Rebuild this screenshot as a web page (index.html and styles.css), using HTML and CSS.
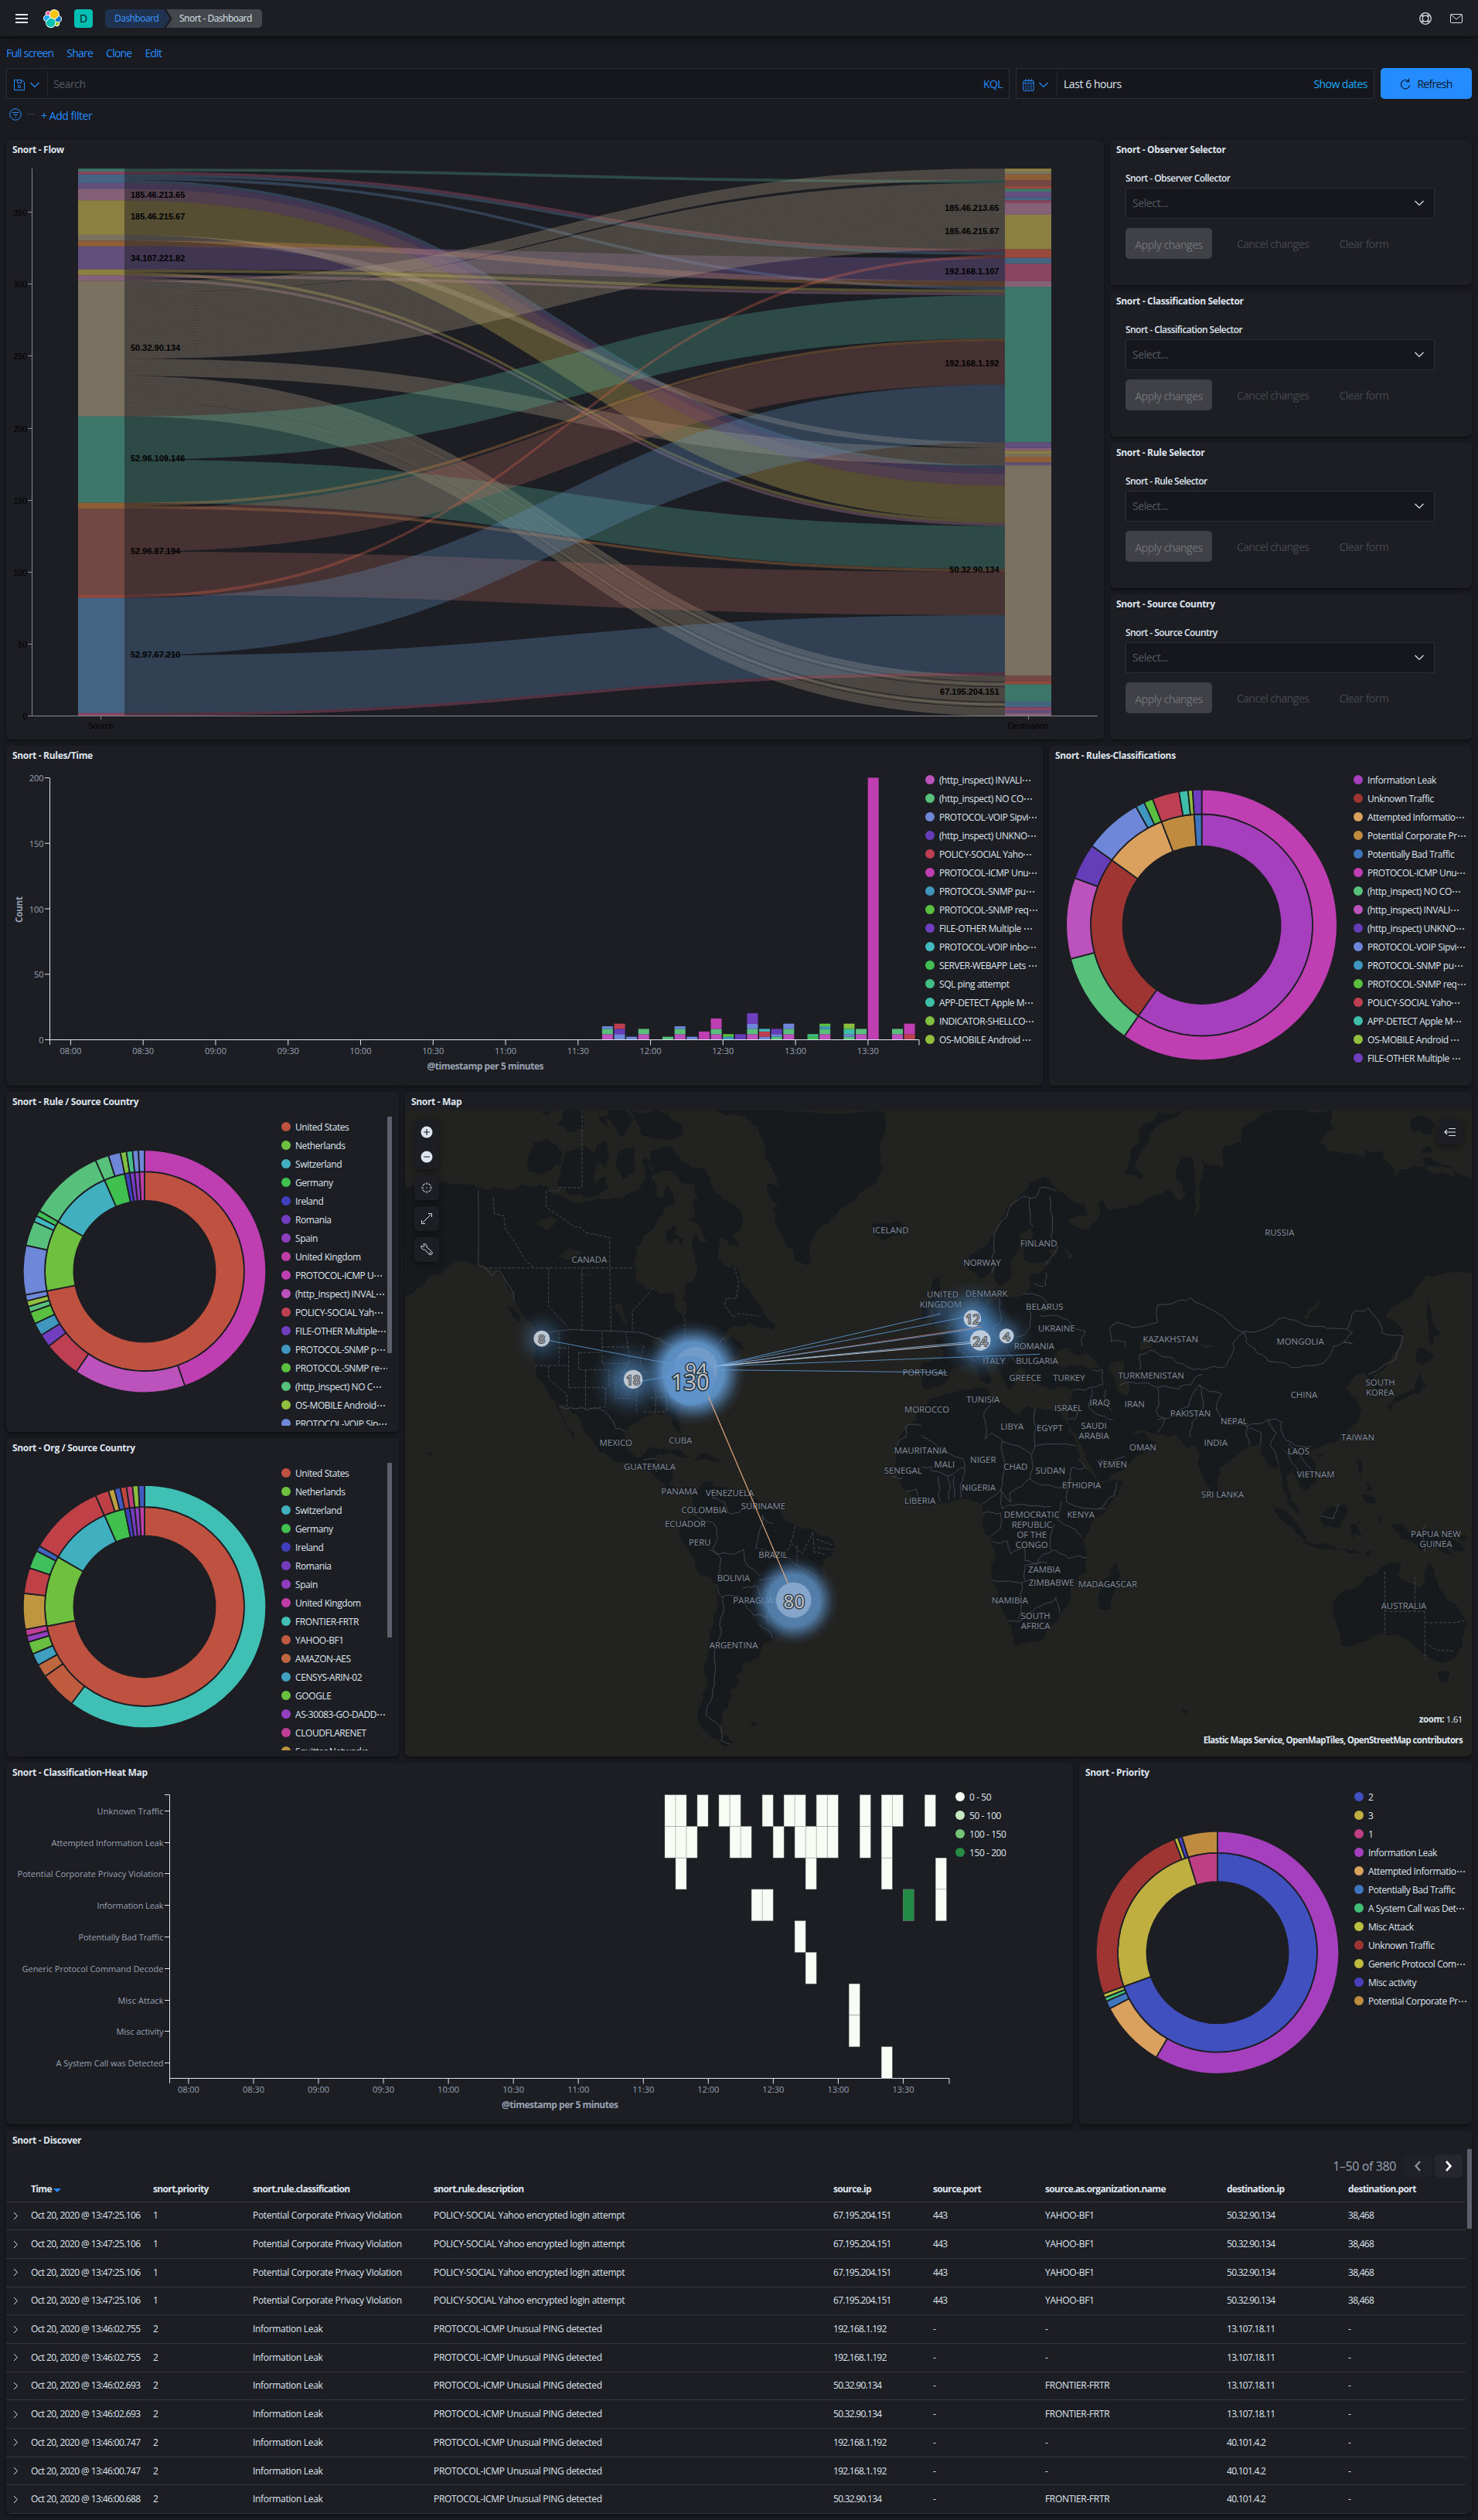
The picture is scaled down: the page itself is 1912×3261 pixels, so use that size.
FILE: index.html
```
<!DOCTYPE html>
<html lang="en">
<head>
<meta charset="utf-8">
<title>Snort - Dashboard</title>
<link rel="stylesheet" href="styles.css">
</head>
<body>
<header class="topbar">
  <svg class="burger" width="16" height="12" viewBox="0 0 16 12"><path d="M0 1h16M0 6h16M0 11h16" stroke="#dfe5ef" stroke-width="2"/></svg>
  <svg class="logo" width="24" height="24" viewBox="0 0 32 32">
    <path fill="#FFF" d="M32 16.77a6.33 6.33 0 0 0-1.14-3.63 6.27 6.27 0 0 0-3.02-2.3 8.91 8.91 0 0 0 .15-1.68 9.07 9.07 0 0 0-16.39-5.3 4.8 4.8 0 0 0-7.46 5.66 6.37 6.37 0 0 0-3 2.32A6.36 6.36 0 0 0 0 15.48a6.37 6.37 0 0 0 1.15 3.66 6.28 6.28 0 0 0 3.04 2.31 8.7 8.7 0 0 0-.15 1.67A9.06 9.06 0 0 0 20.38 28.4a4.8 4.8 0 0 0 7.46-5.66 6.35 6.35 0 0 0 3.01-2.32A6.35 6.35 0 0 0 32 16.77"/>
    <path fill="#FEC514" d="M12.58 13.79l7 3.21 7.07-6.21c.1-.51.15-1.03.15-1.56a7.85 7.85 0 0 0-14.3-4.43l-1.18 6.12z"/>
    <path fill="#00BFB3" d="M5.33 21.21a8 8 0 0 0-.15 1.58 7.87 7.87 0 0 0 14.36 4.41l1.17-6.09-1.56-2.98-7.03-3.21z"/>
    <path fill="#F04E98" d="M5.29 9.07l4.8 1.13 1.05-5.47a3.79 3.79 0 0 0-5.85 4.34"/>
    <path fill="#1BA9F5" d="M4.87 10.21a5.3 5.3 0 0 0-3.6 5.03 5.31 5.31 0 0 0 3.38 4.94l6.74-6.11-1.24-2.65z"/>
    <path fill="#93C90E" d="M20.87 27.18a3.76 3.76 0 0 0 2.29.78 3.79 3.79 0 0 0 3.57-5.04l-4.8-1.12z"/>
    <path fill="#0077CC" d="M21.85 20.56l5.28 1.24a5.3 5.3 0 0 0 3.6-5.03 5.31 5.31 0 0 0-3.39-4.94l-6.91 6.04z"/>
  </svg>
  <span class="space">D</span>
  <nav class="crumbs"><a class="crumb first">Dashboard</a><span class="crumb last">Snort - Dashboard</span></nav>
  <div class="topicons">
    <svg width="16" height="16" viewBox="0 0 16 16" fill="none" stroke="#dfe5ef" stroke-width="1.200"><circle cx="8" cy="8" r="7.300"/><circle cx="8" cy="8" r="3.800"/><path d="M3.600 2.300l2.400 2.600M2.400 3.700l2.500 2.300M12.400 2.300L10 4.900M13.600 3.700L11.100 6M3.600 13.700L6 11.100M2.400 12.300L4.900 10M12.400 13.700L10 11.100M13.600 12.300L11.100 10"/></svg>
    <svg width="16" height="16" viewBox="0 0 16 16" fill="none" stroke="#dfe5ef"><rect x=".5" y="2.5" width="15" height="11" rx="1"/><path d="M1 3l7 6 7-6"/></svg>
  </div>
</header>
<nav class="menu"><a>Full screen</a><a>Share</a><a>Clone</a><a>Edit</a></nav>
<div class="querybar">
  <div class="box search">
    <div class="prefix">
      <svg width="16" height="16" viewBox="0 0 16 16" fill="none" stroke="#258cff"><path d="M1.5 1.5h10l3 3v10h-13zM5.5 1.5v4h5v-4"/><circle cx="8" cy="10" r="1.6"/></svg>
      <svg width="12" height="8" viewBox="0 0 12 8" fill="none" stroke="#258cff" stroke-width="1.2"><path d="M.5 1L6 6.5 11.5 1"/></svg>
    </div>
    <span class="placeholder">Search</span><a class="kql">KQL</a>
  </div>
  <div class="box dates">
    <div class="prefix date">
      <svg width="15" height="16" viewBox="0 0 15 16" fill="none" stroke="#258cff"><rect x=".8" y="2.5" width="13.4" height="13" rx="1"/><path d="M1 5.5h13M4 0v3.5M7.5 0v3.5M11 0v3.5M3 8h2m1.5 0h2m1.5 0h2M3 10.5h2m1.5 0h2m1.5 0h2M3 13h2m1.5 0h2m1.5 0h2"/></svg>
      <svg width="12" height="8" viewBox="0 0 12 8" fill="none" stroke="#258cff" stroke-width="1.2"><path d="M.5 1L6 6.5 11.5 1"/></svg>
    </div>
    <span class="range">Last 6 hours</span><a class="show">Show dates</a>
  </div>
  <button class="refresh"><svg width="14" height="16" viewBox="0 0 14 16" fill="none" stroke="#0b1628" stroke-width="1.1"><path d="M11.5 4.500A5.700 5.700 0 1 0 12.800 9M11.600.800v4h-4"/></svg>Refresh</button>
</div>
<div class="filters">
  <svg width="16" height="16" viewBox="0 0 16 16" fill="none" stroke="#258cff"><circle cx="8" cy="8" r="7.300"/><path d="M3.500 5.500h9M5.500 8.500h5M7.300 11.500h1.400"/></svg>
  <i class="dash"></i><a>+ Add filter</a>
</div>
<main class="rows">
  <section class="row r1">
    <article class="panel"><h2>Snort - Flow</h2><svg id="flow" class="chart" viewBox="8 205 1420 752"></svg></article>
    <div class="selectors" id="selectors"></div>
  </section>
  <section class="row r2">
    <article class="panel"><h2>Snort - Rules/Time</h2><div class="body"><svg id="rules" class="chart" viewBox="8 989 1189 416"></svg><ul class="legend" id="lg-rules"></ul></div></article>
    <article class="panel"><h2>Snort - Rules-Classifications</h2><div class="body"><svg id="classif" class="chart" viewBox="1358 989 394 416"></svg><ul class="legend" id="lg-classif"></ul></div></article>
  </section>
  <section class="row r3">
    <div class="stack">
      <article class="panel"><h2>Snort - Rule / Source Country</h2><div class="body clip"><svg id="rulesrc" class="chart" viewBox="8 1437 356 416"></svg><ul class="legend" id="lg-rulesrc"></ul><i class="thumb"></i></div></article>
      <article class="panel"><h2>Snort - Org / Source Country</h2><div class="body clip"><svg id="orgsrc" class="chart" viewBox="8 1885 356 388"></svg><ul class="legend" id="lg-orgsrc"></ul><i class="thumb short"></i></div></article>
    </div>
    <article class="panel mappanel"><h2>Snort - Map</h2>
      <svg id="map" class="chart" viewBox="524 1437 1380 836"></svg>
      <div class="mapctl left">
        <div class="ctl tall">
          <svg width="16" height="16" viewBox="0 0 16 16"><circle cx="8" cy="8" r="7.500" fill="#dfe5ef"/><path d="M4 8h8M8 4v8" stroke="#1d1e24" stroke-width="1.200"/></svg>
          <svg width="16" height="16" viewBox="0 0 16 16"><circle cx="8" cy="8" r="7.500" fill="#dfe5ef"/><path d="M4 8h8" stroke="#1d1e24" stroke-width="1.200"/></svg>
        </div>
        <div class="ctl"><svg width="16" height="16" viewBox="0 0 16 16" fill="none" stroke="#dfe5ef"><path d="M8 1v3M8 12v3M1 8h3M12 8h3M7.300 8h1.400M2.700 5.800A6 6 0 0 1 5.800 2.700M10.200 2.700A6 6 0 0 1 13.300 5.800M13.300 10.200A6 6 0 0 1 10.200 13.300M5.800 13.300A6 6 0 0 1 2.700 10.200"/></svg></div>
        <div class="ctl"><svg width="16" height="16" viewBox="0 0 16 16" fill="none" stroke="#dfe5ef"><path d="M1.500 10v4.500H6M10 1.500h4.500V6M3 13l10-10"/></svg></div>
        <div class="ctl"><svg width="16" height="16" viewBox="0 0 16 16" fill="none" stroke="#dfe5ef"><path d="M1 3l3 1.500L5.200 3.300 3.800.800C6.500 0 9 2.200 8 5l6.500 5.500a2.400 2.400 0 0 1-3.500 3.500L5.500 8C3 9 .200 6 1 3z"/><circle cx="12.500" cy="12.300" r=".6"/></svg></div>
      </div>
      <div class="mapctl right"><div class="ctl"><svg width="16" height="12" viewBox="0 0 16 12" fill="none" stroke="#dfe5ef" stroke-width="1.200"><path d="M6 1.500h9M1 6h14M6 10.500h9M4 3L1 6l3 3"/></svg></div></div>
      <div class="mapnote"><p><b>zoom:</b> 1.61</p><p><b>Elastic Maps Service, OpenMapTiles, OpenStreetMap contributors</b></p></div>
    </article>
  </section>
  <section class="row r4">
    <article class="panel"><h2>Snort - Classification-Heat Map</h2><div class="body"><svg id="heat" class="chart" viewBox="8 2305 1228 444"></svg><ul class="legend" id="lg-heat"></ul></div></article>
    <article class="panel"><h2>Snort - Priority</h2><div class="body"><svg id="priority" class="chart" viewBox="1396 2305 356 444"></svg><ul class="legend" id="lg-priority"></ul></div></article>
  </section>
  <section class="row r5">
    <article class="panel discover"><h2>Snort - Discover</h2>
      <div class="scroll">
        <div class="pager"><span>1–50 of 380</span>
          <button class="pg off"><svg width="10" height="16" viewBox="0 0 10 16" fill="none" stroke="#8a8f98" stroke-width="2.400"><path d="M8 2L2.500 8 8 14"/></svg></button>
          <button class="pg"><svg width="10" height="16" viewBox="0 0 10 16" fill="none" stroke="#fff" stroke-width="2.600"><path d="M2 2l5.500 6L2 14"/></svg></button>
        </div>
        <table>
          <thead><tr><th></th><th>Time<i class="sort"></i></th><th>snort.priority</th><th>snort.rule.classification</th><th>snort.rule.description</th><th>source.ip</th><th>source.port</th><th>source.as.organization.name</th><th>destination.ip</th><th>destination.port</th></tr></thead>
          <tbody id="events"></tbody>
        </table>
      </div>
      <i class="thumb"></i>
    </article>
  </section>
</main>
<script src="charts.js"></script>
<script src="map.js"></script>
</body>
</html>
```
FILE: styles.css
```
* { box-sizing: border-box; }
body { margin: 0; background: #1a1b20; color: #dfe5ef; font: 12px/16px "Open Sans", sans-serif; width: 1912px; height: 3261px; overflow: hidden; }
h2, p, ul { margin: 0; padding: 0; }
button { border: 0; font: inherit; }
a { color: #258cff; }
svg { display: block; flex: none; }

.topbar { height: 47px; display: flex; align-items: center; padding: 1px 20px 0; background: #1d1e24; box-shadow: 0 2px 2px rgba(0,0,0,.4), 0 6px 14px rgba(0,0,0,.2); position: relative; }
.logo { margin-left: 20px; }
.space { width: 24px; height: 24px; margin: 0 16px; border-radius: 4px; background: #00bfb3; color: #111; font-size: 14px; line-height: 24px; text-align: center; }
.crumbs { display: flex; height: 24px; line-height: 24px; letter-spacing: -.5px; }
.first { width: 87px; padding-left: 12px; background: #1f3350; color: #3d98ff; border-radius: 5px 0 0 5px; clip-path: polygon(0 0, 76px 0, 84px 50%, 76px 100%, 0 100%); }
.last { width: 124px; margin-left: -8px; padding-left: 17px; background: #44474c; border-radius: 0 5px 5px 0; clip-path: polygon(0 0, 100% 0, 100% 100%, 0 100%, 8px 50%); }
.topicons { margin-left: auto; display: flex; gap: 24px; }

.menu { height: 41px; padding: 12px 8px 0; display: flex; gap: 17px; font-size: 14px; line-height: 20px; letter-spacing: -.78px; }
.querybar { display: flex; gap: 8px; padding: 0 8px; height: 40px; font-size: 14px; letter-spacing: -.45px; }
.box { background: #16171c; border: 1px solid #2c2e34; display: flex; align-items: center; }
.box > span, .box > a { padding-top: 2px; }
.search { width: 1298px; }
.dates { width: 464px; }
.prefix { width: 53px; height: 36px; display: flex; align-items: center; gap: 6px; padding: 3px 0 0 8px; border-right: 1px solid #26282e; border-radius: 4px; }
.placeholder { margin-left: 7px; color: #535966; }
.kql { margin: 0 8px 0 auto; letter-spacing: -.6px; }
.range { margin-left: 8px; }
.show { margin: 0 8px 0 auto; color: #1ba9f5; letter-spacing: -.55px; }
.refresh { width: 118px; padding-top: 2px; background: #258cff; color: #0b1628; border-radius: 5px; display: flex; align-items: center; justify-content: center; gap: 8px; letter-spacing: -.7px; }
.filters { height: 53px; display: flex; align-items: flex-start; padding: 12px 12px 0; font-size: 14px; letter-spacing: -.45px; }
.dash { width: 9px; height: 1px; background: #3a3d44; margin: 7px 9px 0 7px; }
.filters a { line-height: 19px; }

.rows { display: flex; flex-direction: column; gap: 8px; padding: 0 8px; }
.row { display: grid; gap: 8px; }
.r1 { grid-template-columns: 1420px 468px; height: 776px; }
.r2 { grid-template-columns: 1341px 547px; height: 440px; }
.r3 { grid-template-columns: 508px 1380px; height: 860px; }
.r4 { grid-template-columns: 1380px 508px; height: 468px; }
.r5 { grid-template-columns: 1896px; height: 496px; }
.panel { background: #1d1e24; border-radius: 6px; box-shadow: 0 2px 3px rgba(0,0,0,.35), 0 0 6px rgba(0,0,0,.2); overflow: hidden; position: relative; display: flex; flex-direction: column; }
.panel h2 { height: 24px; flex: none; padding: 5px 8px 0; font-size: 12px; line-height: 16px; font-weight: 700; letter-spacing: -.32px; }
.selectors { display: grid; grid-template-rows: repeat(4, 188px); gap: 8px; }
.stack { display: grid; grid-template-rows: 440px 412px; gap: 8px; }

.form { padding: 18px 20px 0; }
.form label { display: block; font-weight: 600; letter-spacing: -.55px; line-height: 16px; margin-bottom: 4px; }
.select { width: 400px; height: 40px; padding: 0 13px 0 8px; display: flex; align-items: center; justify-content: space-between; background: #16171c; border: 1px solid #2c2e34; color: #535966; font-size: 14px; letter-spacing: -.4px; }
.actions { display: flex; gap: 0; margin-top: 12px; font-size: 14px; line-height: 41px; letter-spacing: -.52px; color: #45474d; }
.actions span { margin-left: 32px; }
.actions span + span { margin-left: 39px; }
.actions button { width: 112px; height: 40px; border-radius: 5px; background: #404146; color: #707277; letter-spacing: -.5px; }

.body { display: flex; flex: 1; min-height: 0; }
.legend { list-style: none; padding-top: 8px; flex: 1; white-space: nowrap; letter-spacing: -.42px; }
.legend li { height: 24px; line-height: 17px; display: flex; align-items: center; gap: 6px; }
.legend li i { width: 12px; height: 12px; border-radius: 50%; flex: none; }
.clip { padding-bottom: 8px; }
.clip svg { margin-bottom: -8px; }
.clip .legend { padding-top: 9px; overflow: hidden; }
.thumb { width: 6px; height: 306px; margin: 8px 9px 0 0; background: #5c606b; flex: none; }
.short { height: 226px; }

.mapctl { position: absolute; top: 36px; display: flex; flex-direction: column; gap: 8px; }
.mapctl.left { left: 12px; }
.mapctl.right { right: 12px; }
.ctl { width: 32px; height: 32px; border-radius: 5px; background: #1d1e24; display: flex; flex-direction: column; align-items: center; justify-content: center; box-shadow: 0 3px 10px rgba(0,0,0,.4); }
.tall { height: 64px; gap: 16px; }
.mapnote { position: absolute; right: 12px; bottom: 12px; text-align: right; line-height: 18px; letter-spacing: -.4px; font-size: 11.5px; }
.mapnote p + p { margin-top: 9px; letter-spacing: -.65px; }

.discover { flex-direction: column; }
.scroll { width: 1888px; }
.discover .thumb { position: absolute; right: 0; top: 24px; height: 103px; margin: 0; }
.pager { height: 42px; display: flex; gap: 4px; align-items: center; justify-content: flex-end; padding: 2px 4px 0 0; color: #98a2b3; font-size: 16px; letter-spacing: -.4px; }
.pager span { margin-right: 6px; }
.pg { width: 36px; height: 30px; border-radius: 5px; background: #25262e; display: flex; align-items: center; justify-content: center; padding: 0; }
.off { background: #202127; }
table { border-collapse: collapse; table-layout: fixed; width: 1888px; }
th, td { text-align: left; padding: 0; border-bottom: 1px solid #343741; white-space: nowrap; }
th { height: 26px; padding-bottom: 6px; font-weight: 700; letter-spacing: -.64px; }
td { height: 36.7px; letter-spacing: -.32px; }
td:nth-child(2) { letter-spacing: -.61px; }
td:nth-child(6), td:nth-child(7), td:nth-child(9), td:nth-child(10) { letter-spacing: -.73px; }
th:nth-child(1) { width: 32px; }
th:nth-child(2) { width: 158px; }
th:nth-child(3) { width: 129px; }
th:nth-child(4) { width: 234px; }
th:nth-child(5) { width: 517px; }
th:nth-child(6) { width: 129px; }
th:nth-child(7) { width: 145px; }
th:nth-child(8) { width: 235px; }
th:nth-child(9) { width: 157px; }
td svg { margin-left: 9px; }
.sort { display: inline-block; margin-left: 2px; border: 5px solid transparent; border-top-color: #258cff; border-bottom: 0; vertical-align: 0; }
svg text { font-family: "Open Sans", sans-serif; }
.vega text { font-family: "Liberation Sans", Arial, sans-serif; }
```
FILE: charts.js
```
const $ = id => document.getElementById(id);
const txt = (x, y, s, o = '') => `<text x="${x}" y="${y}" dominant-baseline="central" ${o}>${s}</text>`;

/* ---------- Flow (sankey) ---------- */
(() => {
  const C = { t: '#54B399', b: '#6092C0', p: '#D36086', v: '#9170B8', m: '#CA8EAE', o: '#D6BF57', u: '#B9A888', r: '#DA8B45', n: '#AA6556', e: '#E7664C' };
  const top = 218.2, k = 708.3 / 380, y = v => top + v * k;
  const stackL = 't2 p2 b6 v4 m8 o24 u4 r4 v16 o4 m4 u94 t60 r4 n60 e2 b80 p2';
  const stackR = 'o2 u2 r4 n4 e2 t2 v4 b2 p2 m8 o24 e6 b4 p12 m4 t108 v4 m2 o2 u2 r4 v2 u146 n4 e2 t12 b4 p2 v2 m2';
  const links = [['t', 0, 8, 2], ['p', 2, 56, 2], ['b', 4, 58, 2], ['b', 6, 82, 2], ['b', 8, 206, 2], ['v', 10, 208, 4], ['m', 14, 212, 8], ['o', 22, 220, 24], ['u', 46, 190, 4], ['r', 50, 78, 4], ['v', 54, 62, 16], ['o', 70, 84, 2], ['o', 72, 244, 2], ['m', 74, 86, 2], ['m', 76, 246, 2], ['u', 78, 0, 8], ['u', 86, 10, 46], ['u', 132, 194, 12], ['u', 144, 352, 28], ['t', 172, 88, 30], ['t', 202, 248, 30], ['r', 232, 118, 2], ['r', 234, 278, 2], ['n', 236, 120, 30], ['n', 266, 280, 30], ['e', 296, 60, 2], ['b', 298, 150, 40], ['b', 338, 310, 40], ['p', 378, 350, 2]];
  let h = '<g class="vega">';
  for (const [c, a, b, n] of links) {
    const step = c === 'u' && n > 4 ? 2 : n;
    for (let i = 0; i < n; i += step) {
      /* a few of the thin flows leave and arrive in a slightly different order */
      const shift = n === 28 ? ({ 4: .4, 6: -.4, 18: .5, 20: -.5 }[i] || 0) : 0;
      const s0 = y(a + i), s1 = y(a + i + step), d0 = y(b + i + shift), d1 = y(b + i + step + shift);
      h += `<path fill="${C[c]}" fill-opacity=".3" d="M161 ${s0}C730.5 ${s0} 730.5 ${d0} 1300 ${d0}V${d1}C730.5 ${d1} 730.5 ${s1} 161 ${s1}Z"/>`;
    }
  }
  for (const [x, list] of [[101, stackL], [1300, stackR]]) {
    let v = 0;
    for (const s of list.split(' ')) {
      const n = +s.slice(1);
      h += `<rect x="${x}" y="${y(v)}" width="60" height="${n * k}" fill="${C[s[0]]}" fill-opacity=".6"/>`;
      v += n;
    }
  }
  h += '<path d="M41.5 218V926.5H1420M130.5 926v5M1330.5 926v5" stroke="#888b90" fill="none"/>';
  for (let v = 0; v <= 350; v += 50) {
    const yy = Math.round(926.3 - v * k) + .5;
    h += `<path d="M36 ${yy}h5.5" stroke="#888b90"/>` + txt(35, yy, v, 'text-anchor="end" font-size="10.5"');
  }
  h += txt(130.5, 938.5, 'Source', 'text-anchor="middle" font-size="10.5"') + txt(1330, 938.5, 'Destination', 'text-anchor="middle" font-size="10.5"');
  for (const [s, yy] of [['185.46.213.65', 251.5], ['185.46.215.67', 280], ['34.107.221.82', 333.5], ['50.32.90.134', 450], ['52.96.109.146', 593], ['52.96.87.194', 713], ['52.97.67.210', 847]])
    h += txt(169, yy, s, 'font-size="11" font-weight="700"');
  for (const [s, yy] of [['185.46.213.65', 269], ['185.46.215.67', 299], ['192.168.1.107', 351], ['192.168.1.192', 470], ['50.32.90.134', 737], ['67.195.204.151', 895]])
    h += txt(1292.5, yy, s, 'text-anchor="end" font-size="11" font-weight="700"');
  $('flow').innerHTML = h + '</g>';
})();

/* ---------- Selector forms ---------- */
$('selectors').innerHTML = [['Snort - Observer Selector', 'Snort - Observer Collector'], ['Snort - Classification Selector', 'Snort - Classification Selector'], ['Snort - Rule Selector', 'Snort - Rule Selector'], ['Snort - Source Country', 'Snort - Source Country']].map(([a, b]) => `<article class="panel"><h2>${a}</h2><div class="form"><label>${b}</label><div class="select">Select...<svg width="12" height="8" viewBox="0 0 12 8" fill="none" stroke="#dfe5ef" stroke-width="1.2"><path d="M.5 1L6 6.5 11.5 1"/></svg></div><div class="actions"><button>Apply changes</button><span>Cancel changes</span><span>Clear form</span></div></div></article>`).join('');

/* ---------- Time axis shared by the bar chart and the heat map ---------- */
const axis = (x0, step, y, end, left) => {
  let h = `<path d="M${left} ${y}H${end}" stroke="#dfe5ef"/><path d="M${end} ${y}v7" stroke="#dfe5ef"/>`;
  for (let i = 0; i < 12; i++) {
    const m = 480 + i * 30, x = x0 + i * step;
    h += `<path d="M${x} ${y}v7" stroke="#dfe5ef"/>` + txt(x, y + 14, String(m / 60 | 0).padStart(2, '0') + ':' + (m % 60 ? '30' : '00'), 'text-anchor="middle" font-size="11" fill="#98a2b3" textLength="28"');
  }
  return h;
};

/* ---------- Rules over time ---------- */
(() => {
  const P = '#bc52bc', G = '#57c17b', B = '#6f87d8', V = '#663db8', R = '#bf3f52', M = '#bf3fb2', S = '#3f97bf', L = '#5ac03f';
  const bars = { 0: [P, 4, G, 4, B, 2], 1: [B, 4, V, 4, R, 4], 2: [B, 2], 3: [P, 4, G, 4], 5: [G, 2], 6: [P, 4, G, 4, B, 2], 7: [B, 2], 8: [M, 6], 9: [P, 4, G, 4, M, 8], 10: [S, 2, L, 2], 11: [V, 4], 12: [P, 4, G, 4, B, 4, '#703fbf', 8], 13: [B, 2, R, 4, '#42b8bf', 2], 14: [G, 2, B, 2, V, 4], 15: [P, 4, G, 4, B, 4], 17: ['#42bf53', 2, '#42bf86', 2], 18: [P, 4, G, 4, S, 2, L, 2], 20: [G, 2, B, 2, '#3fbfa9', 4, '#7fbf40', 2, '#93bf3f', 2], 21: [P, 4, G, 4], 22: [M, 200], 24: [P, 4, G, 4], 25: [R, 4, M, 8] };
  let h = axis(91.4, 93.77, 1345.5, 1189, 64) + '<path d="M64.5 1006.5V1345M64.5 1345v7" stroke="#dfe5ef"/>';
  for (let v = 0; v <= 200; v += 50) {
    const y = 1345.5 - v * 1.695;
    h += `<path d="M58 ${y}h6" stroke="#dfe5ef"/>` + txt(56.5, y, v, 'text-anchor="end" font-size="11" fill="#98a2b3"');
  }
  for (const i in bars) {
    let y = 1345;
    for (let j = 0; j < bars[i].length; j += 2) {
      const d = bars[i][j + 1] * 1.693;
      y -= d;
      h += `<rect x="${778.9 + i * 15.628}" y="${y}" width="14" height="${d}" fill="${bars[i][j]}"/>`;
    }
  }
  h += txt(628, 1379.5, '@timestamp per 5 minutes', 'text-anchor="middle" font-size="12" font-weight="700" fill="#98a2b3" textLength="151"');
  h += `<text transform="translate(24 1177) rotate(-90)" text-anchor="middle" dominant-baseline="central" font-size="11.5" font-weight="700" fill="#98a2b3" textLength="34">Count</text>`;
  $('rules').innerHTML = h;
})();

/* ---------- Two-ring donuts; each slice is [end angle, colour] ---------- */
const donut = (id, cx, cy, r0, r1, r2, inner, outer) => {
  const pt = (r, a) => [cx + r * Math.sin(a * Math.PI / 180), cy - r * Math.cos(a * Math.PI / 180)].map(v => v.toFixed(2)).join(' ');
  const ring = (a0, a1, ra, rb, c) => {
    const big = a1 - a0 > 180 ? 1 : 0;
    return `<path fill="${c}" stroke="#1d1e24" stroke-width="1.8" d="M${pt(rb, a0)}A${rb} ${rb} 0 ${big} 1 ${pt(rb, a1)}L${pt(ra, a1)}A${ra} ${ra} 0 ${big} 0 ${pt(ra, a0)}Z"/>`;
  };
  let h = '';
  for (const [list, ra, rb] of [[inner, r0, r1], [outer, r1, r2]]) {
    let a = 0;
    for (const [e, c] of list) { h += ring(a, e, ra, rb, c); a = e; }
  }
  $(id).innerHTML = h;
};
const share = (total, list) => { let s = 0; return list.map(([n, c]) => [(s += n) * 360 / total, c]); };

donut('classif', 1555.6, 1197, 102, 143.5, 175.3,
  share(372, [[222, '#a63fbe'], [94, '#9e3533'], [34, '#daa05d'], [18, '#bf8b3f'], [4, '#3f74be']]),
  share(372, [[222, '#bf3fb2'], [42, '#57c17b'], [36, '#bc52bc'], [16, '#663db8'], [26, '#6f87d8'], [4, '#3f97bf'], [4, '#5ac03f'], [12, '#bf3f52'], [4, '#3fbfa9'], [2, '#93bf3f'], [4, '#703fbf']]));

const countries = [[258.6, '#bf5140'], [299.8, '#70c040'], [336.3, '#40afc0'], [348.5, '#40c04f'], [351.4, '#4040bf'], [354.3, '#743dbf'], [357.1, '#8e3dbf'], [360, '#bf3da6']];
donut('rulesrc', 187, 1645.2, 91.5, 129, 157.2, countries,
  [[160.6, '#bf3fb2'], [214.2, '#bc52bc'], [232, '#bf3f52'], [238.3, '#703fbf'], [244.5, '#3f97bf'], [250.3, '#5ac03f'], [253.1, '#57c17b'], [255.9, '#93bf3f'], [258.8, '#6f87d8'], [282.4, '#6f87d8'], [294.3, '#57c17b'], [297.2, '#42b8bf'], [300, '#42bf53'], [336.2, '#57c17b'], [342.7, '#57c17b'], [348.5, '#6f87d8'], [351.4, '#7fbf40'], [354.3, '#42bf86'], [357.1, '#6f87d8'], [360, '#6f87d8']]);
donut('orgsrc', 187, 2079, 91.5, 129, 157.2, countries,
  [[217, '#40bfb5'], [235, '#bf5c40'], [241.2, '#bf683f'], [247, '#40a0bf'], [253, '#68bf40'], [256, '#943fbf'], [259.1, '#bf3f97'], [276.3, '#bf9540'], [288.6, '#bf4047'], [297.3, '#40bf5d'], [300, '#4064bf'], [336.2, '#bf4047'], [342.7, '#bf4047'], [345.6, '#bf9f40'], [348.5, '#405abf'], [351.4, '#bf4540'], [354.3, '#bf3f78'], [357.1, '#8abf40'], [360, '#405abf']]);
donut('priority', 1575, 2526.7, 91.5, 129, 157.2,
  share(380, [[264, '#4050bf'], [98, '#bfae40'], [18, '#bf3f85']]),
  share(380, [[222, '#a63fbe'], [34, '#daa05d'], [4, '#3f74be'], [2, '#3fbf78'], [2, '#b9bf3f'], [94, '#9e3533'], [2, '#bfbb3f'], [2, '#4840bf'], [18, '#bf8b3f']]));

/* ---------- Heat map ---------- */
(() => {
  const rows = [['Unknown Traffic', [0, 1, 3, 5, 6, 9, 11, 12, 14, 15, 18, 20, 21, 24], 2343.5], ['Attempted Information Leak', [0, 1, 2, 6, 7, 10, 12, 13, 14, 15, 18, 20], 2384.5], ['Potential Corporate Privacy Violation', [1, 13, 20, 25], 2424.5], ['Information Leak', [8, 9, 22, 25], 2465.5], ['Potentially Bad Traffic', [12], 2506.5], ['Generic Protocol Command Decode', [13], 2547.5], ['Misc Attack', [17], 2588.5], ['Misc activity', [17], 2628.5], ['A System Call was Detected', [20], 2669.5]];
  const width = [86, 145, 189, 86, 110, 183, 59, 61, 139];
  let h = axis(243.9, 84.05, 2689.5, 1228, 219) + '<path d="M213 2322.5h6.5V2696" fill="none" stroke="#dfe5ef"/>';
  rows.forEach(([name, cells, y], r) => {
    h += `<path d="M213 ${y}h6" stroke="#dfe5ef"/>` + txt(211.5, y - .5, name, `text-anchor="end" font-size="11" fill="#98a2b3" textLength="${width[r]}"`);
    for (const c of cells)
      h += `<rect x="${(860 + c * 14.01).toFixed(1)}" y="${(2322.7 + r * 40.74).toFixed(1)}" width="14" height="40.7" fill="${r === 3 && c === 22 ? '#238b45' : '#f7fcf5'}" stroke="#8d918f" stroke-width=".4"/>`;
  });
  $('heat').innerHTML = h + txt(724.5, 2723.5, '@timestamp per 5 minutes', 'text-anchor="middle" font-size="12" font-weight="700" fill="#98a2b3" textLength="151"');
})();

/* ---------- Legends ---------- */
const legend = (id, list) => $('lg-' + id).innerHTML = list.map(([c, s]) => `<li><i style="background:${c}"></i>${s}</li>`).join('');
legend('rules', [['#bc52bc', '(http_inspect) INVALI⋯'], ['#57c17b', '(http_inspect) NO CO⋯'], ['#6f87d8', 'PROTOCOL-VOIP Sipvi⋯'], ['#663db8', '(http_inspect) UNKNO⋯'], ['#bf3f52', 'POLICY-SOCIAL Yaho⋯'], ['#bf3fb2', 'PROTOCOL-ICMP Unu⋯'], ['#3f97bf', 'PROTOCOL-SNMP pu⋯'], ['#5ac03f', 'PROTOCOL-SNMP req⋯'], ['#703fbf', 'FILE-OTHER Multiple ⋯'], ['#42b8bf', 'PROTOCOL-VOIP inbo⋯'], ['#42bf53', 'SERVER-WEBAPP Lets ⋯'], ['#42bf86', 'SQL ping attempt'], ['#3fbfa9', 'APP-DETECT Apple M⋯'], ['#7fbf40', 'INDICATOR-SHELLCO⋯'], ['#93bf3f', 'OS-MOBILE Android ⋯']]);
legend('classif', [['#a63fbe', 'Information Leak'], ['#9e3533', 'Unknown Traffic'], ['#daa05d', 'Attempted Informatio⋯'], ['#bf8b3f', 'Potential Corporate Pr⋯'], ['#3f74be', 'Potentially Bad Traffic'], ['#bf3fb2', 'PROTOCOL-ICMP Unu⋯'], ['#57c17b', '(http_inspect) NO CO⋯'], ['#bc52bc', '(http_inspect) INVALI⋯'], ['#663db8', '(http_inspect) UNKNO⋯'], ['#6f87d8', 'PROTOCOL-VOIP Sipvi⋯'], ['#3f97bf', 'PROTOCOL-SNMP pu⋯'], ['#5ac03f', 'PROTOCOL-SNMP req⋯'], ['#bf3f52', 'POLICY-SOCIAL Yaho⋯'], ['#3fbfa9', 'APP-DETECT Apple M⋯'], ['#93bf3f', 'OS-MOBILE Android ⋯'], ['#703fbf', 'FILE-OTHER Multiple ⋯']]);
const nations = [['#bf5140', 'United States'], ['#70c040', 'Netherlands'], ['#40afc0', 'Switzerland'], ['#40c04f', 'Germany'], ['#4040bf', 'Ireland'], ['#743dbf', 'Romania'], ['#8e3dbf', 'Spain'], ['#bf3da6', 'United Kingdom']];
legend('rulesrc', [...nations, ['#bf3fb2', 'PROTOCOL-ICMP U⋯'], ['#bc52bc', '(http_inspect) INVAL⋯'], ['#bf3f52', 'POLICY-SOCIAL Yah⋯'], ['#703fbf', 'FILE-OTHER Multiple⋯'], ['#3f97bf', 'PROTOCOL-SNMP p⋯'], ['#5ac03f', 'PROTOCOL-SNMP re⋯'], ['#57c17b', '(http_inspect) NO C⋯'], ['#93bf3f', 'OS-MOBILE Android⋯'], ['#6f87d8', 'PROTOCOL-VOIP Sip⋯']]);
legend('orgsrc', [...nations, ['#40bfb5', 'FRONTIER-FRTR'], ['#bf5c40', 'YAHOO-BF1'], ['#bf683f', 'AMAZON-AES'], ['#40a0bf', 'CENSYS-ARIN-02'], ['#68bf40', 'GOOGLE'], ['#943fbf', 'AS-30083-GO-DADD⋯'], ['#bf3f97', 'CLOUDFLARENET'], ['#bf9540', 'Squitter Networks']]);
legend('heat', [['#f7fcf5', '0 - 50'], ['#c7e9c0', '50 - 100'], ['#74c476', '100 - 150'], ['#238b45', '150 - 200']]);
legend('priority', [['#4050bf', '2'], ['#bfae40', '3'], ['#bf3f85', '1'], ['#a63fbe', 'Information Leak'], ['#daa05d', 'Attempted Informatio⋯'], ['#3f74be', 'Potentially Bad Traffic'], ['#3fbf78', 'A System Call was Det⋯'], ['#b9bf3f', 'Misc Attack'], ['#9e3533', 'Unknown Traffic'], ['#bfbb3f', 'Generic Protocol Com⋯'], ['#4840bf', 'Misc activity'], ['#bf8b3f', 'Potential Corporate Pr⋯']]);

/* ---------- Events ---------- */
const yahoo = ['47:25.106', 1, 'Potential Corporate Privacy Violation', 'POLICY-SOCIAL Yahoo encrypted login attempt', '67.195.204.151', '443', 'YAHOO-BF1', '50.32.90.134', '38,468'];
const ping = (t, ip, org, dst) => [t, 2, 'Information Leak', 'PROTOCOL-ICMP Unusual PING detected', ip, '-', org, dst, '-'];
$('events').innerHTML = [yahoo, yahoo, yahoo, yahoo,
  ping('46:02.755', '192.168.1.192', '-', '13.107.18.11'), ping('46:02.755', '192.168.1.192', '-', '13.107.18.11'),
  ping('46:02.693', '50.32.90.134', 'FRONTIER-FRTR', '13.107.18.11'), ping('46:02.693', '50.32.90.134', 'FRONTIER-FRTR', '13.107.18.11'),
  ping('46:00.747', '192.168.1.192', '-', '40.101.4.2'), ping('46:00.747', '192.168.1.192', '-', '40.101.4.2'),
  ping('46:00.688', '50.32.90.134', 'FRONTIER-FRTR', '40.101.4.2')
].map(r => '<tr><td><svg width="7" height="11" viewBox="0 0 7 11" fill="none" stroke="#dfe5ef"><path d="M1 1l4.5 4.5L1 10"/></svg></td>' + r.map((c, i) => `<td>${i ? c : 'Oct 20, 2020 @ 13:' + c}</td>`).join('') + '</tr>').join('');
```
FILE: map.js
```
(() => {
  /* Shapes live on a stretched grid; E shifts the eastern half next to the western one. */
  const E = 1550, X = x => 520 + x / 2.24, Y = y => 1405 + y / 1.7818;
  let seed = 7;
  const rnd = () => (seed = (seed * 16807) % 2147483647) / 2147483647 - .5;
  const parse = (s, dx) => s.trim().split(/\s+/).map(p => { const [x, y] = p.split(','); return [X(+x + dx), Y(+y)]; });
  const rough = (pts, closed, amount, depth) => {
    for (let d = 0; d < depth; d++) {
      const out = [];
      for (let i = 0; i < pts.length; i++) {
        const a = pts[i], b = pts[(i + 1) % pts.length];
        out.push(a);
        if (!closed && i === pts.length - 1) break;
        const l = Math.hypot(b[0] - a[0], b[1] - a[1]), k = Math.min(l, 22) * amount;
        out.push([(a[0] + b[0]) / 2 + rnd() * k, (a[1] + b[1]) / 2 + rnd() * k]);
      }
      pts = out;
    }
    return 'M' + pts.map(p => p[0].toFixed(1) + ' ' + p[1].toFixed(1)).join('L') + (closed ? 'Z' : '');
  };
  const west = [
    '9,235 60,218 90,215 120,222 160,225 200,228 240,240 280,235 330,238 345,228 365,232 400,228 420,232 430,245 470,258 520,272 550,265 600,262 640,258 660,248 690,235 705,200 700,165 715,170 722,215 735,250 750,262 765,230 785,248 790,275 765,280 755,300 735,320 700,345 680,370 672,410 685,455 710,470 750,480 790,478 800,520 818,545 825,520 820,470 845,450 850,410 838,365 850,340 880,360 905,365 915,400 935,415 950,420 965,415 990,460 1030,500 1050,525 1000,552 960,552 930,590 960,580 985,590 990,605 960,625 940,620 930,640 910,655 890,685 870,705 850,720 820,735 800,745 792,758 803,785 808,803 795,795 780,765 755,758 720,755 690,768 660,785 645,800 645,820 655,840 680,858 700,850 712,835 745,838 735,858 730,872 760,878 782,882 783,905 775,920 800,935 830,925 850,930 845,945 820,945 790,938 760,918 720,890 660,880 620,868 575,845 545,810 520,780 480,740 455,735 470,770 490,800 510,822 500,815 475,785 455,752 440,725 420,700 400,680 385,640 385,600 395,570 375,550 350,530 325,495 310,470 295,440 250,420 220,412 190,405 150,405 125,420 80,440 30,480 9,490',
    '370,200 380,130 420,122 450,140 462,180 430,195 400,205', '400,57 440,57 420,70', '470,57 530,60 520,100 480,105 450,90', '450,220 475,150 530,140 560,160 560,225 590,210 600,235 560,255 480,250',
    '560,150 590,125 600,160 590,190 565,180', '630,150 670,140 675,200 640,215 620,180', '600,57 650,57 670,80 640,120 610,90', '660,57 740,57 810,90 810,115 740,122 690,110', '570,70 600,65 595,95',
    '720,150 760,140 790,148 830,180 870,190 900,235 930,260 985,300 985,330 955,345 975,370 950,368 925,350 920,375 885,360 860,320 825,310 850,290 840,265 860,260 850,230 810,225 790,205 760,195 725,205', '760,335 790,320 800,350 775,365', '795,345 815,350 810,368', '840,275 855,280 850,295',
    '915,57 1385,57 1402,100 1388,150 1395,190 1340,240 1310,265 1280,280 1255,300 1220,320 1195,350 1175,415 1140,405 1110,360 1080,310 1072,285 1090,275 1065,255 1060,225 1095,235 1070,180 1050,140 1030,95 990,70 940,70',
    '1360,320 1400,318 1440,310 1462,325 1440,345 1400,358 1370,345', '1005,545 1040,520 1080,550 1075,562 1050,560', '730,850 760,835 800,838 845,858 810,858 780,845', '845,862 870,848 900,855 925,862 900,866', '300,505 330,520 345,545 320,530', '75,845 88,850 78,853',
    '850,930 870,918 895,912 905,925 945,930 990,930 1020,945 1045,960 1090,975 1110,1000 1140,1015 1190,1025 1245,1045 1255,1060 1240,1085 1215,1110 1212,1150 1200,1180 1160,1195 1130,1205 1110,1225 1100,1250 1080,1275 1050,1285 1040,1300 1030,1320 990,1330 985,1350 968,1360 975,1375 950,1395 955,1410 930,1440 925,1470 920,1490 960,1515 930,1522 890,1500 865,1475 858,1440 870,1400 880,1360 885,1320 895,1290 905,1240 912,1200 910,1150 880,1130 850,1110 830,1070 805,1040 812,1015 840,985 840,950', '1000,1472 1030,1468 1020,1478',
    '1545,445 1565,440 1560,470 1580,510 1585,545 1535,560 1545,530 1530,500 1535,460', '1505,505 1525,505 1522,540 1500,542'
  ];
  const east = [
    '-45,640 -45,695 -20,700 15,690 35,668 40,655 75,645 100,635 120,660 150,690 158,678 150,660 132,635 140,630 180,655 195,680 210,700 225,690 220,665 240,650 255,655 262,672 300,692 330,702 370,692 395,702 390,745 380,768 400,800 430,850 455,890 465,915 510,895 560,870 620,840 633,822 600,800 570,802 545,795 530,770 505,752 512,775 545,800 580,795 640,805 690,805 725,835 750,830 755,870 775,910 795,945 815,930 820,880 850,865 890,838 910,832 940,830 950,860 965,880 982,885 990,870 1000,900 1005,935 1020,965 1048,990 1045,970 1020,935 1010,905 1030,885 1050,915 1065,935 1100,912 1098,880 1075,855 1085,838 1115,830 1150,825 1180,812 1220,775 1230,750 1215,722 1185,695 1225,665 1240,662 1255,680 1262,710 1285,700 1265,668 1300,650 1335,610 1350,560 1300,530 1380,480 1420,437 1500,432 1550,430 1550,215 1520,205 1480,190 1400,187 1340,195 1325,215 1290,150 1240,145 1240,165 1130,152 1110,130 1150,100 1145,57 980,57 940,65 885,100 885,130 828,145 828,190 780,180 768,170 765,250 760,290 738,310 750,270 750,200 740,165 710,162 692,210 720,250 702,265 670,240 620,255 560,275 500,290 480,262 470,268 470,300 440,330 385,320 380,310 440,300 430,275 345,240 310,210 275,220 240,250 200,280 180,330 150,360 95,390 92,425 125,445 150,435 165,400 180,462 210,450 215,400 240,370 240,340 272,325 280,345 255,375 250,400 290,410 335,405 310,425 268,440 265,475 230,490 170,495 142,505 140,470 122,480 118,512 90,525 60,540 30,570 -10,585 20,610 18,630',
    '15,715 60,705 110,697 150,700 160,732 200,740 240,758 262,738 300,745 355,750 362,762 385,800 405,835 425,868 455,902 480,918 540,912 530,930 490,980 445,1015 425,1045 435,1080 435,1120 385,1160 385,1190 360,1215 350,1235 310,1275 260,1285 220,1288 205,1235 180,1190 160,1140 170,1080 155,1040 130,1010 140,990 130,965 85,952 50,958 0,960 -45,968 -85,935 -110,910 -120,890 -115,860 -125,838 -100,800 -70,775 -50,745 -20,720',
    '520,1098 532,1125 505,1205 475,1208 465,1180 480,1140 500,1130', '712,57 640,60 590,95 585,130 560,150 545,200 600,220 575,185 605,140 640,90', '1375,75 1410,70 1445,90 1430,112 1380,108', '1400,167 1440,172 1495,188 1500,207 1420,195', '1405,145 1430,140 1435,155 1410,155',
    '1422,490 1435,525 1462,570 1440,578 1435,600 1425,560', '1395,605 1440,622 1420,638 1395,640', '1400,648 1420,690 1400,712 1350,722 1312,735 1345,712 1385,700', '1302,732 1320,735 1312,750', '1217,808 1227,802 1222,826', '1215,862 1232,868 1225,900 1240,915 1225,910', '1235,945 1270,950 1268,965 1245,962', '1245,915 1262,930 1245,935', '1098,848 1120,850 1108,858',
    '970,962 1000,975 1060,1030 1070,1050 1040,1032 1000,1000', '1060,1050 1110,1055 1150,1062 1165,1072 1100,1066', '1110,990 1150,970 1180,960 1190,972 1178,1000 1165,1022 1125,1018', '1200,1008 1242,998 1215,1012 1230,1045 1212,1030 1205,1045', '1175,1070 1210,1070 1235,1075 1200,1078', '1240,1080 1262,1072 1252,1085', '1315,1012 1350,1010 1370,1030 1400,1025 1450,1032 1490,1045 1530,1070 1500,1075 1480,1062 1510,1085 1460,1072 1440,1060 1400,1072 1345,1045', '1280,990 1292,1000 1285,1012', '1500,1040 1535,1035 1540,1048',
    '1145,1185 1160,1178 1220,1155 1240,1130 1262,1130 1280,1120 1300,1105 1345,1102 1335,1125 1380,1150 1405,1155 1415,1120 1427,1092 1442,1130 1462,1165 1500,1195 1532,1230 1530,1260 1505,1315 1465,1330 1430,1320 1400,1300 1380,1290 1340,1265 1290,1262 1240,1282 1170,1292 1168,1265 1148,1220', '1450,1350 1485,1350 1477,1378 1458,1372', '812,938 828,935 842,948 830,957', '710,1437 728,1440 720,1448', '1050,550 1055,552'
  ];
  const waterW = ['390,318 430,302 450,310 420,335', '445,395 490,375 530,378 480,402', '510,435 555,430 520,442', '615,505 635,500 655,560 640,545', '715,590 745,578 770,592 735,598'];
  const waterE = ['345,640 340,620 370,605 395,605 380,612 410,622 435,615 470,650 440,652 400,645 370,650', '500,640 540,635 545,660 560,690 548,715 525,705 518,675 495,655', '1060,535 1085,510 1110,485 1105,510 1075,540', '750,595 810,598 780,606', '588,590 620,588 622,605 592,610', '325,380 350,378 345,400', '370,375 395,390 382,402'];
  const dash = ['522,57 522,235 455,235 455,242 418,242 418,280 500,325 520,327 530,338 602,350 602,420 606,568', '240,420 672,420', '425,420 425,510 480,555', '522,420 522,568', '265,258 268,295 295,300 300,330 330,365 360,405 385,420', '728,467 668,520 668,568', '820,537 820,600', '963,418 975,450 970,490 940,490 935,505 960,535 975,525 1040,532', '455,568 455,645', '385,645 483,645', '483,600 483,698', '425,645 425,675 478,712 478,740', '580,568 580,640 660,640', '512,615 580,615', '512,615 512,655 600,655', '455,605 483,605', '483,696 590,696', '532,655 532,745', '590,696 590,740 540,745', '600,655 600,696', '648,568 655,600', '580,602 655,602', '620,670 620,720 680,722', '680,700 680,755', '700,600 690,640 720,680', '735,700 735,755', '765,700 768,750', '700,752 765,752', '640,660 720,660', '655,600 660,635 640,660', '720,720 800,715', '1140,1015 1125,1060 1110,1080', '1130,1055 1160,1080 1190,1030', '1200,1045 1250,1060', '1205,1065 1250,1070', '1110,1080 1140,1105 1200,1128 1200,1150', '1035,1140 1100,1130 1130,1120', '1050,1160 1090,1180 1110,1200', '1145,1060 1145,1105', '1025,1065 1110,1085', '1190,1030 1195,1075 1225,1080'];
  const dashE = ['1298,1120 1298,1262', '1385,1132 1385,1212', '1298,1212 1414,1212', '1414,1212 1414,1322', '1414,1238 1500,1238 1532,1233', '1414,1285 1450,1302 1500,1303'];
  const solid = ['221,240 221,412 240,420 258,438 280,425 305,455 325,480 325,495', '425,568 680,568 730,580 790,600', '455,738 500,745 540,748 570,745 600,760 620,790 648,797', '900,615 930,580 940,590', '905,928 900,950 935,960 945,985 975,985 1000,970 1020,950', '840,985 870,1000 905,1010 915,1040 900,1068', '890,1070 950,1080 990,1070 995,1098 1035,1130', '900,1068 925,1090 912,1130', '1075,1010 1045,990 1025,1065', '985,1160 1030,1155 1035,1195 1065,1205 1060,1240', '925,1180 985,1180 1020,1222 1060,1225', '912,1150 930,1180 925,1225 915,1280 905,1320 905,1370 895,1420 880,1450 925,1480 925,1510 950,1518', '1035,1240 1075,1275', '700,862 735,860', '735,890 780,882'];
  const solidE = ['160,432 165,370 180,320 215,275 250,255 275,260 300,235 330,238 345,245', '270,258 278,325', '325,255 335,300 330,345 350,375 315,412', '180,490 185,545 160,555 175,580 225,575', '250,480 300,485 320,500 310,520', '280,455 315,460 315,430', '265,500 270,545 260,570 230,580', '300,530 350,530 400,560 430,565 420,600', '230,600 300,600 330,605', '200,610 230,640', '65,565 60,610 110,635', '125,585 160,590', '500,560 520,545 590,555 640,545 640,505 700,495 735,488 780,510 840,540 865,560 890,568', '890,565 950,560 1000,535 1050,545 1120,555 1180,560 1205,570 1180,590 1205,595 1150,600 1120,640 1050,650 960,635 920,605 895,590 890,568', '1190,560 1210,520 1250,512 1280,540 1290,570 1350,578 1330,630 1250,665', '890,568 860,590 855,620 830,650 770,655 730,650', '500,560 505,590 545,590 545,605', '588,655 588,620 620,610 655,625 700,640 730,650', '530,690 600,685 640,695 700,700 735,690 770,665', '480,690 480,655 450,655', '395,702 450,695 480,690', '410,745 400,770 380,768', '440,740 470,760 510,770', '450,700 440,740', '490,700 505,750', '640,695 635,750 660,770 640,800', '640,770 690,760 730,740 760,690 825,710 810,750', '810,745 840,780 900,785 960,770 1000,775', '735,810 740,775 770,745 760,690', '900,785 905,830', '905,790 940,800 935,830', '960,770 985,800 965,830 990,870', '1000,775 1005,810 1040,830 1085,830', '1005,840 1030,870 1060,900 1080,900', '1020,825 1050,850 1080,880 1085,900', '285,745 285,830 403,830', '285,830 275,850 190,820 160,800 140,815 135,760 155,735', '-15,820 75,860 80,880 30,900 -20,885', '-45,785 -90,785 -90,810 -125,838', '-45,805 -15,820', '80,880 75,910 70,950', '190,820 195,880 185,930 130,965', '275,850 270,905 320,920 375,925 390,880 430,880', '430,880 410,860', '390,905 375,960 440,975 490,975', '360,960 350,1000 370,1012 420,1040', '185,930 215,960 210,940 270,905', '185,930 190,975 250,965 330,970', '135,985 185,985 185,1020 155,1040', '160,1050 205,1050 215,1080 255,1065 255,1095 300,1100', '160,1140 270,1140', '255,1140 255,1105 320,1100', '245,1145 245,1195 235,1230', '205,1235 240,1235 300,1200 345,1180', '290,1100 340,1070 380,1090 435,1088', '345,1180 355,1215', '340,1010 330,1070', '-90,935 -60,930 -55,960', '-45,880 -10,880', '5,900 10,960', '30,900 35,955', '50,900 50,950', '-130,900 -100,905', '460,865 500,870 545,855', '520,915 515,945 470,975', '1110,990 1150,998 1165,965', '1414,1015 1414,1075'];
  const p = (list, dx, amount, depth) => list.map(s => rough(parse(s, dx), true, amount, depth)).join('');
  const l = (list, dx, amount, depth) => list.map(s => rough(parse(s, dx), false, amount, depth)).join('');
  let h = '<defs><radialGradient id="glow"><stop offset="0" stop-color="#6096cc"/><stop offset=".58" stop-color="#5f93c8" stop-opacity=".95"/><stop offset=".74" stop-color="#5a8fc6" stop-opacity=".5"/><stop offset=".88" stop-color="#4c86c0" stop-opacity=".14"/><stop offset="1" stop-color="#4c86c0" stop-opacity="0"/></radialGradient><radialGradient id="soft"><stop offset="0" stop-color="#5d96cf" stop-opacity=".95"/><stop offset=".4" stop-color="#4f86bd" stop-opacity=".6"/><stop offset=".75" stop-color="#4079b0" stop-opacity=".15"/><stop offset="1" stop-color="#4079b0" stop-opacity="0"/></radialGradient></defs>';
  h += '<rect x="524" y="1437" width="1380" height="836" fill="#222220"/>';
  h += `<path fill="#171a1d" d="${p(west, 0, .38, 2)}${p(east, E, .34, 2)}"/>`;
  h += `<path fill="#222220" d="${p(waterW, 0, .3, 2)}${p(waterE, E, .3, 2)}"/>`;
  h += `<g fill="none" stroke="#41464d"><path stroke-dasharray="4 2" d="${l(dash, 0, 0, 0)}${l(dashE, E, 0, 0)}"/><path d="${l(solid, 0, .3, 2)}${l(solidE, E, .3, 2)}"/></g>`;

  const names = [['CANADA', 543, 400], ['ICELAND', 1416, 333], ['MEXICO', 620, 822], ['CUBA', 807, 817], ['GUATEMALA', 718, 878], ['PANAMA', 804, 934], ['VENEZUELA', 950, 938], ['SURINAME', 1047, 968], ['COLOMBIA', 875, 977], ['ECUADOR', 821, 1010], ['PERU', 863, 1053], ['BRAZIL', 1075, 1080], ['BOLIVIA', 961, 1134], ['PARAGUAY', 1025, 1186], ['ARGENTINA', 961, 1289], ['UNITED', 1567, 481], ['KINGDOM', 1561, 504], ['PORTUGAL', 1516, 661], ['MOROCCO', 1521, 746], ['MAURITANIA', 1503, 840], ['SENEGAL', 1452, 887], ['LIBERIA', 1501, 956]];
  const namesE = [['RUSSIA', 993, 338], ['FINLAND', 295, 363], ['NORWAY', 131, 408], ['DENMARK', 144, 479], ['BELARUS', 312, 509], ['UKRAINE', 347, 558], ['ROMANIA', 282, 599], ['ITALY', 165, 634], ['BULGARIA', 290, 634], ['GREECE', 256, 672], ['TURKEY', 383, 672], ['KAZAKHSTAN', 677, 584], ['MONGOLIA', 1053, 589], ['TURKMENISTAN', 621, 668], ['CHINA', 1064, 711], ['SOUTH', 1285, 683], ['KOREA', 1284, 706], ['TUNISIA', 134, 722], ['ISRAEL', 381, 743], ['IRAQ', 472, 729], ['IRAN', 573, 733], ['PAKISTAN', 735, 754], ['NEPAL', 861, 773], ['LIBYA', 218, 785], ['EGYPT', 327, 789], ['SAUDI', 455, 783], ['ARABIA', 455, 806], ['INDIA', 808, 823], ['OMAN', 597, 833], ['TAIWAN', 1220, 809], ['LAOS', 1048, 842], ['NIGER', 134, 861], ['MALI', 22, 872], ['CHAD', 228, 878], ['SUDAN', 329, 886], ['YEMEN', 509, 872], ['VIETNAM', 1098, 896], ['NIGERIA', 121, 925], ['ETHIOPIA', 419, 920], ['SRI LANKA', 828, 942], ['DEMOCRATIC', 275, 988], ['REPUBLIC', 275, 1011], ['OF THE', 275, 1034], ['CONGO', 275, 1057], ['KENYA', 417, 988], ['ZAMBIA', 311, 1114], ['ZIMBABWE', 332, 1145], ['MADAGASCAR', 495, 1149], ['NAMIBIA', 211, 1185], ['SOUTH', 286, 1221], ['AFRICA', 286, 1244], ['AUSTRALIA', 1353, 1198], ['PAPUA NEW', 1446, 1032], ['GUINEA', 1446, 1055]];
  h += '<g font-size="11.4" font-weight="500" fill="#848c9a" text-anchor="middle" stroke="#171a1d" stroke-width="2" paint-order="stroke">';
  for (const [s, x, y] of names) h += txt(X(x), Y(y), s);
  for (const [s, x, y] of namesE) h += txt(X(x + E), Y(y), s);
  h += '</g>';

  const circle = (x, y, r, f, o = 1) => `<circle cx="${X(x)}" cy="${Y(y)}" r="${r}" fill="${f}" opacity="${o}"/>`;
  h += circle(405, 583, 38, 'url(#soft)', .45) + circle(660, 677, 52, 'url(#soft)', .8) + circle(1135, 1187, 58, 'url(#glow)', .85) + circle(1652, 540, 50, 'url(#soft)', .95) + circle(1676, 587, 50, 'url(#soft)') + circle(1752, 577, 34, 'url(#soft)', .5) + circle(1560, 520, 30, 'url(#soft)', .3);
  h += circle(845, 662, 68, 'url(#glow)');
  const lines = [[1560, 526, '#5f9bd5'], [1653, 530, '#5f9bd5'], [1680, 556, '#c98a86'], [1652, 562, '#5f9bd5'], [1676, 588, '#8fb8e0'], [1676, 592, '#d5dfea'], [1848, 619, '#5f9bd5'], [1580, 661, '#5f9bd5'], [425, 587, '#5f9bd5'], [695, 681, '#5f9bd5']];
  for (const [x, y, c] of lines) {
    const w = x < 840, ox = w ? 790 : 905, oy = w ? (y > 600 ? 668 : 643) : 647 + (y > 640 ? 8 : 0);
    h += `<path d="M${X(ox)} ${Y(oy)}L${X(x)} ${Y(y)}" stroke="${c}" stroke-width="1" opacity=".85"/>`;
  }
  h += `<path d="M${X(882)} ${Y(705)}L${X(1125)} ${Y(1160)}" stroke="#e0a67c" stroke-width="1.2"/>`;
  h += circle(852, 652, 28, '#7ba0cc', .7) + circle(835, 680, 32, '#5f93cb', .75) + circle(1135, 1186, 22.8, '#86a5ca');
  h += circle(405, 583, 10.5, '#bcc6d0') + circle(670, 677, 12.2, '#bcc6d0') + circle(1653, 537, 11.2, '#bccada') + circle(1676, 587, 13.2, '#bccada') + circle(1752, 577, 9.5, '#bccada');
  for (const [s, x, y, z] of [['8', 405, 583, 15], ['18', 670, 678, 16], ['12', 1654, 538, 16], ['24', 1676, 588, 17], ['4', 1752, 578, 15]])
    h += txt(X(x), Y(y), s, `text-anchor="middle" font-size="${z}" fill="#a5a6a8" stroke="#474d56" stroke-width="2" paint-order="stroke"`);
  h += txt(X(1136), Y(1187), '80', 'text-anchor="middle" font-size="24" fill="#c4c6c9" stroke="#33414f" stroke-width="3" paint-order="stroke"');
  h += txt(X(853), Y(654), '94', 'text-anchor="middle" font-size="25" fill="#c4c6c9" stroke="#26384a" stroke-width="3" paint-order="stroke"');
  h += txt(X(835), Y(681), '130', 'text-anchor="middle" font-size="29" fill="#c4c6c9" stroke="#22323f" stroke-width="3" paint-order="stroke"');
  $('map').innerHTML = h;
})();
```
